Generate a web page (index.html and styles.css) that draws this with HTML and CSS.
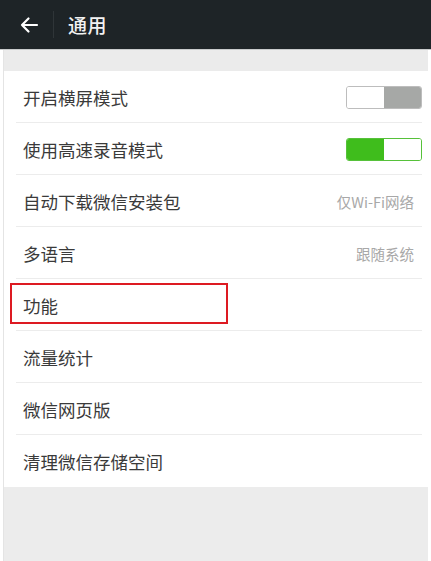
FILE: index.html
```html
<!DOCTYPE html>
<html lang="zh">
<head>
<meta charset="utf-8">
<link rel="stylesheet" href="styles.css">
</head>
<body>
<div class="screen">
  <header class="topbar">
    <svg class="back" width="20" height="18" viewBox="0 0 20 18"><path d="M18 9H3M9.5 2.5L3 9l6.5 6.5" fill="none" stroke="#fff" stroke-width="2.2" stroke-linecap="round" stroke-linejoin="round"/></svg>
    <span class="divider"></span>
    <span class="title">通用</span>
  </header>
  <div class="content">
    <div class="gap"></div>
    <ul class="list">
      <li class="row"><span class="label">开启横屏模式</span><span class="switch off"><i></i><i></i></span></li>
      <li class="row"><span class="label">使用高速录音模式</span><span class="switch on"><i></i><i></i></span></li>
      <li class="row"><span class="label">自动下载微信安装包</span><span class="value">仅Wi-Fi网络</span></li>
      <li class="row"><span class="label">多语言</span><span class="value">跟随系统</span></li>
      <li class="row"><span class="label">功能</span><span class="highlight"></span></li>
      <li class="row"><span class="label">流量统计</span></li>
      <li class="row"><span class="label">微信网页版</span></li>
      <li class="row last"><span class="label">清理微信存储空间</span></li>
    </ul>
  </div>
</div>
</body>
</html>
```
FILE: styles.css
```css
* { box-sizing: border-box; }
html, body { margin: 0; padding: 0; }
body {
  width: 431px;
  height: 561px;
  background: #fff;
  font-family: "Noto Sans CJK SC", "Noto Sans", sans-serif;
  overflow: hidden;
}
.screen { height: 561px; display: flex; flex-direction: column; }
.topbar {
  height: 50px;
  background: #1e2427;
  display: flex;
  align-items: center;
  padding-left: 19px;
  border-bottom: 1px solid #c9cbcc;
}
.back { display: block; }
.divider {
  width: 1px;
  height: 27px;
  background: #2f3538;
  margin-left: 14px;
  margin-right: 14px;
}
.title {
  color: #f2f2f2;
  font-size: 19px;
  font-weight: 500;
  letter-spacing: 0.5px;
}
.content {
  flex: 1;
  background: #ececec;
  margin: 0 3px;
  border-left: 1px solid #e4e4e4;
}
.gap { height: 21px; background: #ebebeb; }
.list { list-style: none; margin: 0; padding: 0; background: #fff; }
.row {
  position: relative;
  height: 52px;
  display: flex;
  align-items: center;
  justify-content: space-between;
  padding: 0 6px 0 19px;
}
.row::after {
  content: "";
  position: absolute;
  left: 12px;
  right: 6px;
  bottom: 0;
  height: 1px;
  background: #ececec;
}
.row.last::after { display: none; }
.label { font-size: 17.5px; color: #3a3a3a; }
.value { font-size: 14.5px; color: #a8a8a8; margin-right: 8px; }
.switch {
  width: 76px;
  height: 23px;
  border-radius: 3px;
  display: flex;
  overflow: hidden;
}
.switch i { flex: 1; }
.switch.off { border: 1px solid #bdbdbd; }
.switch.off i:first-child { background: #fff; }
.switch.off i:last-child { background: #a6a8a6; }
.switch.on { border: 1px solid #56c13a; }
.switch.on i:first-child { background: #3fbd1c; }
.switch.on i:last-child { background: #fff; }
.highlight {
  position: absolute;
  left: 6px;
  top: 4px;
  width: 218px;
  height: 41px;
  border: 2px solid #dd1a22;
}
```
